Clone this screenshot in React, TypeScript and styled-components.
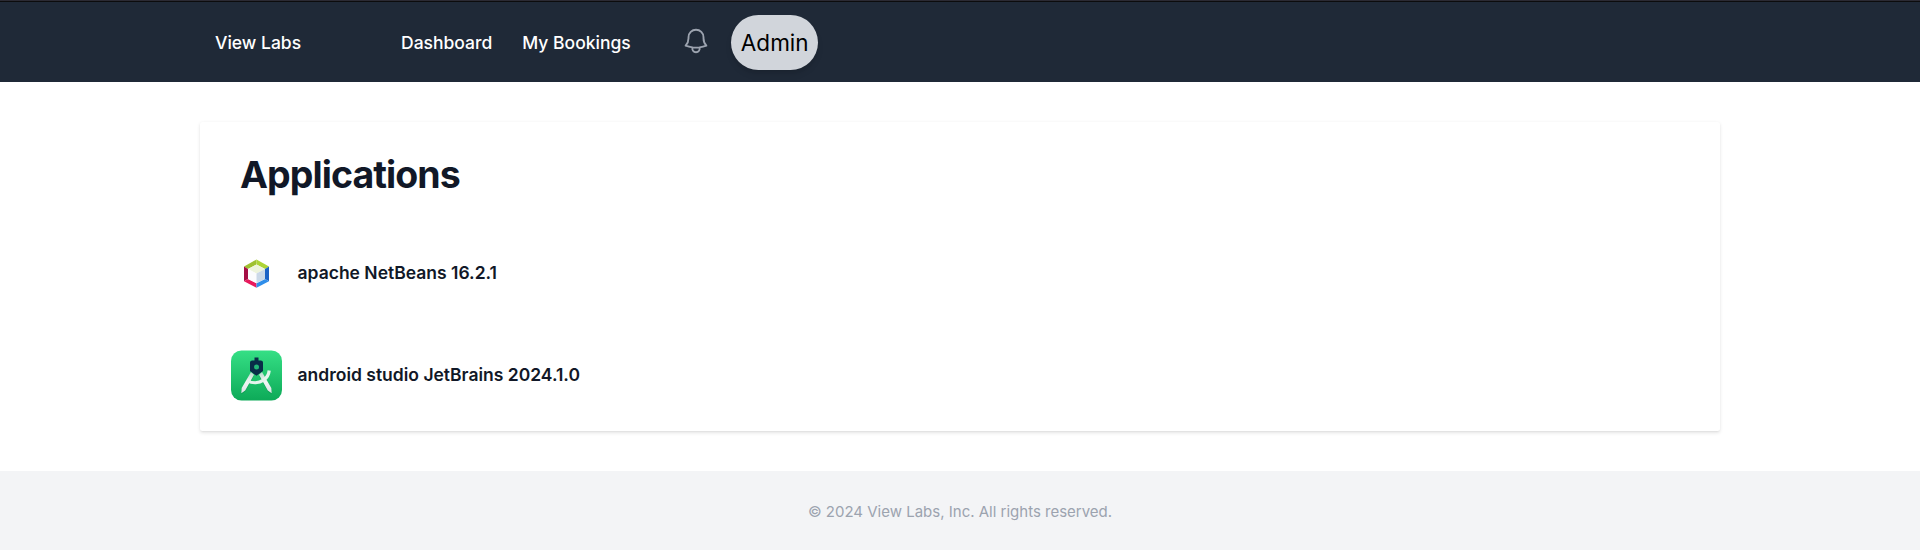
import React from "react";
import styled, { createGlobalStyle } from "styled-components";

const GlobalStyle = createGlobalStyle`
  *, *::before, *::after { box-sizing: border-box; }
  body {
    margin: 0;
    background: #ffffff;
    font-family: Inter, "Liberation Sans", sans-serif;
    color: #111827;
  }
  h1, p, ul { margin: 0; padding: 0; }
`;

const TopEdge = styled.div`
  height: 2px;
  background: #0c0c0d;
  border-top: 1px solid #2b2a33;
`;

const Header = styled.header`
  height: 80px;
  padding: 0 215px;
  display: flex;
  align-items: center;
  background: #1f2937;
`;

const Brand = styled.a`
  width: 186px;
  color: #ffffff;
  font-size: 17.5px;
  line-height: 25px;
  font-weight: 500;
`;

const Nav = styled.nav`
  display: flex;
  gap: 30px;
  margin-right: 50px;
`;

const NavLink = styled.a`
  color: #ffffff;
  font-size: 17.5px;
  line-height: 25px;
  font-weight: 500;
`;

const BellButton = styled.button`
  display: flex;
  padding: 0;
  border: 0;
  background: none;
  color: #9ca3af;
  margin: 0 20px 2px 0;
`;

const UserPill = styled.button`
  width: 87px;
  padding: 10px 0 10px 1px;
  border: 0;
  border-radius: 30px;
  background: #d1d5db;
  color: #000000;
  font: 400 22.5px/35px Inter, "Liberation Sans", sans-serif;
  box-shadow: 0 5px 7.5px -1px rgba(0, 0, 0, 0.1), 0 2.5px 5px -2.5px rgba(0, 0, 0, 0.1);
`;

const Main = styled.main`
  padding: 40px 200px;
`;

const Card = styled.section`
  height: 309px;
  padding: 30px 30px 0;
  border-radius: 2.5px;
  background: #ffffff;
  box-shadow: 0 1.25px 3.75px rgba(0, 0, 0, 0.1), 0 1.25px 2.5px -1.25px rgba(0, 0, 0, 0.1);
`;

const Title = styled.h1`
  padding-left: 10px;
  font-size: 37.5px;
  line-height: 45px;
  font-weight: 700;
  letter-spacing: -0.025em;
`;

const AppList = styled.ul`
  list-style: none;
  margin-top: 24px;
  padding-left: 1px;
`;

const AppRow = styled.li`
  height: 102px;
  display: flex;
  align-items: center;
  gap: 15.5px;
`;

const AppIcon = styled.span`
  display: flex;
  padding-top: 2px;
`;

const AppName = styled.p`
  font-size: 17.5px;
  line-height: 25px;
  font-weight: 600;
`;

const Footer = styled.footer`
  height: 79px;
  display: flex;
  align-items: center;
  justify-content: center;
  padding-top: 2px;
  background: #f3f4f6;
  color: #9ca3af;
  font-size: 15px;
  line-height: 25px;
`;

const BellIcon = () => (
  <svg width="30" height="30" viewBox="0 0 24 24" fill="none" stroke="currentColor" strokeWidth="1.5" strokeLinecap="round" strokeLinejoin="round">
    <path d="M14.857 17.082a23.848 23.848 0 005.454-1.31A8.967 8.967 0 0118 9.75V9A6 6 0 006 9v.75a8.967 8.967 0 01-2.312 6.022c1.733.64 3.56 1.085 5.455 1.31m5.714 0a24.255 24.255 0 01-5.714 0m5.714 0a3 3 0 11-5.714 0" />
  </svg>
);

const NetBeansIcon = () => (
  <svg width="51" height="51" viewBox="0 0 51 51">
    <path d="M25.5 11.5 13 18.5l4 2.5 8.5-4.6z" fill="#9fc131" />
    <path d="m25.5 11.5 12.5 7-4 2.5-8.5-4.6z" fill="#add436" />
    <path d="M13 18.5 17 21v10l-4 2.2z" fill="#a50e45" />
    <path d="m13 33.2 4-2.2 8.5 4.2v4.5z" fill="#e8195c" />
    <path d="M38 18.5 34 21v10l4 2.2z" fill="#1b63c6" />
    <path d="M38 33.2 34 31l-8.5 4.2v4.5z" fill="#2f8eea" />
    <path d="m25.5 16.4 8.5 4.6-8.5 4.5L17 21z" fill="#edf4dc" />
    <path d="m17 21 8.5 4.5v9.7L17 31z" fill="#fbfcfe" />
    <path d="m34 21-8.5 4.5v9.7L34 31z" fill="#cbd9e8" />
  </svg>
);

const AndroidStudioIcon = () => (
  <svg width="51" height="51" viewBox="0 0 51 51">
    <defs>
      <linearGradient id="tile" x1="0" y1="0" x2="0" y2="1">
        <stop offset="0" stopColor="#35df85" />
        <stop offset="1" stopColor="#0daa58" />
      </linearGradient>
      <linearGradient id="legs" x1="0" y1="0" x2="0" y2="1">
        <stop offset="0" stopColor="#b5d9cb" />
        <stop offset="0.45" stopColor="#f1f6f5" />
        <stop offset="1" stopColor="#dbe3e5" />
      </linearGradient>
    </defs>
    <rect x="0" y="0.5" width="51" height="50" rx="10.5" fill="url(#tile)" />
    <g fill="#08783f" opacity="0.35" transform="translate(0 1.2)">
      <path d="m10.3 43.2.4-5.2 9.3-16 3 2.8-8.8 15.6zM40.7 43.2l-.4-5.2-9.3-16-3 2.8 8.8 15.6z" />
    </g>
    <path d="m10.3 43.2.4-5.2 9.3-16 3 2.8-8.8 15.6zM40.7 43.2l-.4-5.2-9.3-16-3 2.8 8.8 15.6z" fill="url(#legs)" />
    <path d="M16.5 30.8c5 2.6 11.500 2.400 16-.6 3.400-2.400 5.300-5.600 5.700-9.700" fill="none" stroke="#e4f4ed" strokeWidth="3.2" />
    <path d="M23.5 7.500h4v3h2.300q2.200 0 2.200 2v8.500l-6.500 4.800L19 21v-8.500q0-2 2.200-2h2.300z" fill="#082d48" />
    <circle cx="25.5" cy="17" r="2.500" fill="#22b777" />
  </svg>
);

const APPS = [
  { name: "apache NetBeans 16.2.1", Icon: NetBeansIcon },
  { name: "android studio JetBrains 2024.1.0", Icon: AndroidStudioIcon },
];

export default function App() {
  return (
    <>
      <GlobalStyle />
      <TopEdge />
      <Header>
        <Brand>View Labs</Brand>
        <Nav>
          <NavLink>Dashboard</NavLink>
          <NavLink>My Bookings</NavLink>
        </Nav>
        <BellButton aria-label="Notifications"><BellIcon /></BellButton>
        <UserPill>Admin</UserPill>
      </Header>
      <Main>
        <Card>
          <Title>Applications</Title>
          <AppList>
            {APPS.map(({ name, Icon }) => (
              <AppRow key={name}>
                <AppIcon><Icon /></AppIcon>
                <AppName>{name}</AppName>
              </AppRow>
            ))}
          </AppList>
        </Card>
      </Main>
      <Footer>© 2024 View Labs, Inc. All rights reserved.</Footer>
    </>
  );
}
